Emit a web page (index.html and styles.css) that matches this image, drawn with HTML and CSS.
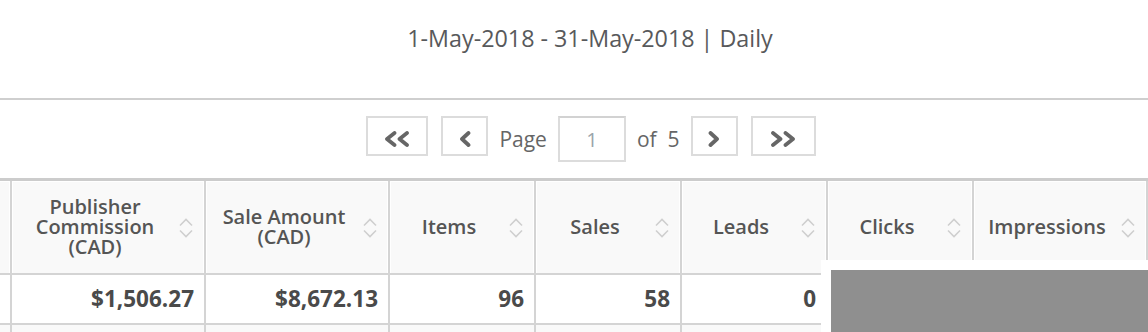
FILE: index.html
```html
<!DOCTYPE html>
<html>
<head>
<meta charset="utf-8">
<link rel="stylesheet" href="styles.css">
</head>
<body>
<div class="page">
  <div class="title">1-May-2018 - 31-May-2018 | Daily</div>
  <div class="rule"></div>
  <div class="pager">
    <button class="pbtn first"><svg width="30" height="16" viewBox="0 0 30 16"><polyline points="12.5,2 5,8 12.5,14" /><polyline points="25,2 17.5,8 25,14" /></svg></button>
    <button class="pbtn prev"><svg width="12" height="16" viewBox="0 0 12 16"><polyline points="9.5,2 3,8 9.5,14" /></svg></button>
    <span class="plabel">Page</span>
    <input class="pinput" type="text" value="1">
    <span class="plabel">of</span>
    <span class="plabel">5</span>
    <button class="pbtn next"><svg width="12" height="16" viewBox="0 0 12 16"><polyline points="2.5,2 9,8 2.5,14" /></svg></button>
    <button class="pbtn last"><svg width="30" height="16" viewBox="0 0 30 16"><polyline points="5,2 12.5,8 5,14" /><polyline points="17.5,2 25,8 17.5,14" /></svg></button>
  </div>
  <div class="table-wrap">
    <div class="grid">
      <div class="th"><span class="th-text"></span><svg class="sort" width="16" height="24" viewBox="0 0 16 24"><polyline points="2,9.5 8,3.5 14,9.5"/><polyline points="2,14.5 8,20.5 14,14.5"/></svg></div>
      <div class="th"><span class="th-text">Publisher Commission (CAD)</span><svg class="sort" width="16" height="24" viewBox="0 0 16 24"><polyline points="2,9.5 8,3.5 14,9.5"/><polyline points="2,14.5 8,20.5 14,14.5"/></svg></div>
      <div class="th"><span class="th-text">Sale Amount (CAD)</span><svg class="sort" width="16" height="24" viewBox="0 0 16 24"><polyline points="2,9.5 8,3.5 14,9.5"/><polyline points="2,14.5 8,20.5 14,14.5"/></svg></div>
      <div class="th"><span class="th-text">Items</span><svg class="sort" width="16" height="24" viewBox="0 0 16 24"><polyline points="2,9.5 8,3.5 14,9.5"/><polyline points="2,14.5 8,20.5 14,14.5"/></svg></div>
      <div class="th"><span class="th-text">Sales</span><svg class="sort" width="16" height="24" viewBox="0 0 16 24"><polyline points="2,9.5 8,3.5 14,9.5"/><polyline points="2,14.5 8,20.5 14,14.5"/></svg></div>
      <div class="th"><span class="th-text">Leads</span><svg class="sort" width="16" height="24" viewBox="0 0 16 24"><polyline points="2,9.5 8,3.5 14,9.5"/><polyline points="2,14.5 8,20.5 14,14.5"/></svg></div>
      <div class="th"><span class="th-text">Clicks</span><svg class="sort" width="16" height="24" viewBox="0 0 16 24"><polyline points="2,9.5 8,3.5 14,9.5"/><polyline points="2,14.5 8,20.5 14,14.5"/></svg></div>
      <div class="th"><span class="th-text">Impressions</span><svg class="sort" width="16" height="24" viewBox="0 0 16 24"><polyline points="2,9.5 8,3.5 14,9.5"/><polyline points="2,14.5 8,20.5 14,14.5"/></svg></div>

      <div class="td"></div>
      <div class="td">$1,506.27</div>
      <div class="td">$8,672.13</div>
      <div class="td">96</div>
      <div class="td">58</div>
      <div class="td">0</div>
      <div class="td"></div>
      <div class="td"></div>

      <div class="td alt"></div>
      <div class="td alt"></div>
      <div class="td alt"></div>
      <div class="td alt"></div>
      <div class="td alt"></div>
      <div class="td alt"></div>
      <div class="td alt"></div>
      <div class="td alt"></div>
    </div>
  </div>
  <div class="mask"><div class="mask-inner"></div></div>
</div>
</body>
</html>
```
FILE: styles.css
```css
html, body {
  margin: 0;
  padding: 0;
  background: #fff;
}
body {
  font-family: "Open Sans", "Liberation Sans", sans-serif;
  color: #555;
}
.page {
  position: relative;
  width: 1148px;
  height: 332px;
  overflow: hidden;
}
.title {
  box-sizing: border-box;
  height: 98px;
  padding-top: 23px;
  padding-left: 32px;
  text-align: center;
  font-size: 23.3px;
  line-height: 30px;
  color: #58595b;
}
.rule {
  height: 2px;
  background: #cfcfcf;
}
.pager {
  display: flex;
  align-items: flex-start;
  justify-content: center;
  gap: 11px;
  margin-top: 16px;
  padding-left: 34px;
  height: 46px;
}
.pbtn {
  box-sizing: border-box;
  height: 40px;
  width: 47px;
  padding: 6px 0 0 0;
  margin: 0;
  border: 2px solid #dcdcdc;
  background: #fff;
  display: flex;
  align-items: center;
  justify-content: center;
}
.pbtn.first { width: 62px; margin-right: 2px; }
.pbtn.last { width: 65px; margin-left: 2px; }
.pbtn svg polyline {
  fill: none;
  stroke: #666;
  stroke-width: 3.8;
  stroke-linecap: round;
  stroke-linejoin: round;
}
.plabel {
  font-size: 21px;
  line-height: 46px;
  color: #666;
}
.pinput {
  box-sizing: border-box;
  width: 68px;
  height: 46px;
  margin: 0;
  padding: 0;
  border: 2px solid #dcdcdc;
  border-top-color: #d2d2d2;
  font-family: "Open Sans", "Liberation Sans", sans-serif;
  font-size: 20px;
  color: #9aa4ab;
  text-align: center;
  background: #fff;
  outline: none;
}
.table-wrap {
  margin-top: 16px;
  overflow: hidden;
}
.grid {
  display: grid;
  grid-template-columns: 144px 192px 182px 144px 144px 144px 144px 172px;
  grid-template-rows: 92px 48px 48px;
  gap: 2px;
  width: max-content;
  margin-left: -134px;
  background: #d4d4d4;
  border-top: 3px solid #cccccc;
  padding-right: 2px;
}
.th {
  display: flex;
  align-items: center;
  gap: 10px;
  padding: 0 10px;
  background: #f9f9f9;
  box-shadow: inset 1px 1px 0 #fff, inset -1px 0 0 #fff;
}
.th-text {
  flex: 1;
  text-align: center;
  font-size: 20px;
  font-weight: 600;
  line-height: 20px;
  color: #555;
}
.sort {
  flex: none;
  margin-top: 2px;
}
.sort polyline {
  fill: none;
  stroke: #cfcfcf;
  stroke-width: 1.6;
}
.td {
  background: #fff;
  text-align: right;
  padding-right: 10px;
  font-size: 22.5px;
  font-weight: 700;
  line-height: 48px;
  color: #4a4a4a;
}
.td.alt {
  background: #f9f9f9;
}
.mask {
  position: absolute;
  left: 821px;
  top: 260px;
  right: 0;
  bottom: 0;
  background: #fff;
  padding: 10px 0 0 10px;
  display: flex;
}
.mask-inner {
  flex: 1;
  background: #8f8f8f;
}
```
